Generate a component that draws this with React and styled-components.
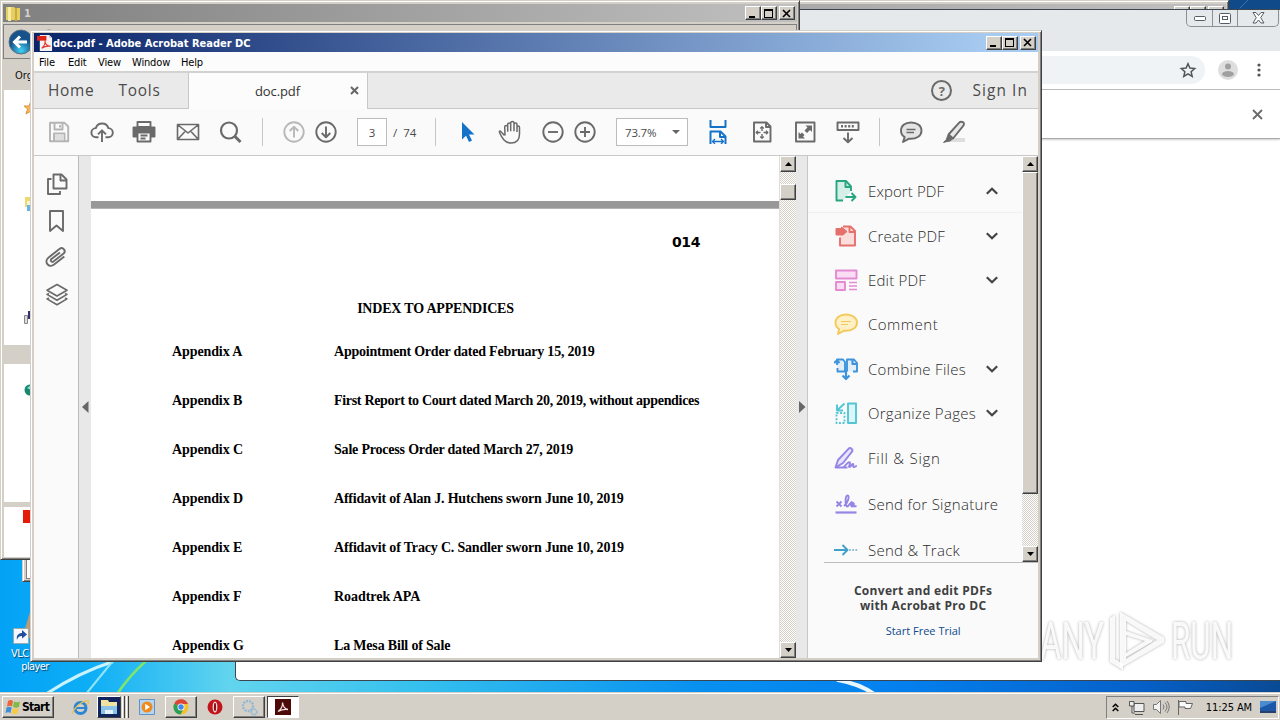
import React from "react";
import styled, { createGlobalStyle, css } from "styled-components";

const UI = `"DejaVu Sans Condensed", "DejaVu Sans", sans-serif`;
const CLEAN = `"Open Sans", "Noto Sans", sans-serif`;

const GlobalStyle = createGlobalStyle`
  * { box-sizing: border-box; }
  html, body { margin: 0; padding: 0; }
  body { width: 1280px; height: 720px; overflow: hidden; }
  svg { display: block; }
`;

const Desktop = styled.main`
  position: relative;
  width: 1280px;
  height: 720px;
  overflow: hidden;
  background: linear-gradient(
    90deg,
    #04a2f6 0,
    #0eaef6 90px,
    #62d4ee 230px,
    #35c0ee 420px,
    #0890f0 700px,
    #0480ee 900px,
    #0660c8 1140px,
    #0a4a94 1280px
  );
`;

const Streaks = styled.svg`
  position: absolute;
  left: 0;
  top: 0;
`;

const WindowFrame = styled.section`
  position: absolute;
  left: ${props => props.x}px;
  top: ${props => props.y}px;
  width: ${props => props.w}px;
  height: ${props => props.h}px;
  display: flex;
  flex-direction: column;
  overflow: hidden;
`;

const ClassicWindow = styled(WindowFrame)`
  padding: ${props => props.pad || "1px"};
  background: #d4d0c8;
  border: 1px solid;
  border-color: #d4d0c8 #404040 #404040 #d4d0c8;
  box-shadow: inset 1px 1px #fff, inset -1px -1px #808080;
`;

const TitleBar = styled.header`
  height: ${props => props.h || 18}px;
  flex: none;
  margin: ${props => props.inset || "1px"};
  display: flex;
  align-items: center;
  padding: 0 2px 0 3px;
  background: ${props =>
    props.active
      ? "linear-gradient(90deg, #0a246a, #a6caf0 95%)"
      : "linear-gradient(90deg, #808080, #c0c0c0)"};
`;

const TitleText = styled.span`
  flex: 1;
  padding: 1px 0 0 ${props => props.gap || 0}px;
  font: bold 11px ${UI};
  color: ${props => (props.active ? "#fff" : "#d4d0c8")};
  white-space: nowrap;
`;

const raised = css`
  background: #d4d0c8;
  border: 1px solid;
  border-color: #fff #404040 #404040 #fff;
  box-shadow: inset -1px -1px #808080;
`;

const CaptionButton = styled.button`
  ${raised}
  width: 16px;
  height: 14px;
  padding: 0;
  margin-left: ${props => (props.apart ? 2 : 0)}px;
  display: flex;
  align-items: center;
  justify-content: center;
`;

const Caption = ({ kind }) =>
  <CaptionButton apart={kind === "close" ? 1 : undefined}>
    <svg width="12" height="11" viewBox="0 0 12 11" fill="none" stroke="#000" shapeRendering="crispEdges">
      {kind === "min" && <path d="M2 8.5h6" strokeWidth="2" />}
      {kind === "max" && <path d="M1.5 2h8M1.5 1v8.5h8V1" strokeWidth="1.4" />}
      {kind === "close" && <path d="M2 2l7 7M9 2L2 9" strokeWidth="1.6" shapeRendering="auto" />}
    </svg>
  </CaptionButton>;

const Captions = () =>
  <React.Fragment>
    <Caption kind="min" />
    <Caption kind="max" />
    <Caption kind="close" />
  </React.Fragment>;

const BlankPane = styled.div`
  flex: 1;
  margin: 18px 2px 1px;
  background: #fff;
  border: 1px solid #808080;
`;

/* explorer window */

const NavStrip = styled.div`
  height: 35px;
  flex: none;
  margin: 2px 1px 0;
  padding: 4px 3px;
  border: 1px solid #808080;
`;

const CommandStrip = styled.div`
  height: 31px;
  flex: none;
  padding: 10px 0 0 13px;
  font: 11px ${UI};
  color: #111;
`;

const NavTree = styled.div`
  flex: 1;
  margin: 0 1px 1px 2px;
  background: #fff;
  display: flex;
  flex-direction: column;
`;

const TreeSlot = styled.div`
  height: ${props => props.h}px;
  flex: none;
  padding-left: ${props => props.indent || 0}px;
  background: ${props => props.fill || "transparent"};
`;

/* browser window */

const BrowserWindow = styled(WindowFrame)`
  background: #fff;
  border: 1px solid #3c4650;
  border-right: 0;
  border-radius: 0 0 0 5px;
`;

const BrowserTabs = styled.div`
  height: 41px;
  flex: none;
  background: #e6e9ec;
  display: flex;
  justify-content: flex-end;
  align-items: flex-start;
`;

const GlassButtons = styled.div`
  display: flex;
  height: 17px;
  margin-right: 1px;
  border: 1px solid #8b9096;
  border-top: 0;
  border-radius: 0 0 5px 5px;
`;

const GlassButton = styled.div`
  width: ${props => props.w}px;
  display: flex;
  align-items: center;
  justify-content: center;
  border-left: ${props => (props.first ? 0 : 1)}px solid #8b9096;
`;

const BrowserToolbar = styled.div`
  height: 39px;
  flex: none;
  display: flex;
  align-items: center;
  justify-content: flex-end;
  border-bottom: 1px solid #b8babd;
`;

const Omnibox = styled.div`
  flex: 1;
  height: 28px;
  border-radius: 14px;
  background: #eff3f6;
  display: flex;
  align-items: center;
  justify-content: flex-end;
  padding-right: 8px;
  margin-right: 13px;
`;

const MenuDots = styled.div`
  width: 42px;
  display: flex;
  justify-content: center;
`;

const InfoBar = styled.div`
  height: 49px;
  flex: none;
  display: flex;
  align-items: center;
  justify-content: flex-end;
  padding-right: 17px;
  border-bottom: 1px solid #a9a9a9;
  box-shadow: 0 1px 2px #ccc;
`;

/* reader window */

const MenuBar = styled.nav`
  height: 19px;
  flex: none;
  margin: 0 1px;
  display: flex;
  align-items: center;
  gap: 12px;
  padding: 1px 0 0 5px;
  background: #fcfcfc;
  font: 11px ${UI};
  color: #000;
`;

const MenuItem = styled.span`
  letter-spacing: -0.15px;
  width: ${props => props.w}px;
  white-space: nowrap;
`;

const TabStrip = styled.div`
  height: 38px;
  flex: none;
  margin: 0 1px;
  display: flex;
  background: #eaeaea;
  border-top: 2px solid #d2d2cf;
  font-family: ${CLEAN};
  color: #4b4b4b;
`;

const TabGroup = styled.div`
  display: flex;
  align-items: center;
  justify-content: ${props => (props.end ? "flex-end" : "flex-start")};
  flex: ${props => (props.end ? 1 : "none")};
  width: ${props => (props.end ? "auto" : "154px")};
  padding: 0 ${props => (props.end ? 10 : 0)}px 0 14px;
  gap: ${props => (props.end ? 20 : 24)}px;
  border-bottom: 1px solid #c8c8c8;
  font-size: 15.4px;
  letter-spacing: ${props => (props.end ? 1.1 : 0.75)}px;
`;

const DocTab = styled.div`
  width: 180px;
  display: flex;
  align-items: center;
  padding: 0 8px 1px 66px;
  justify-content: space-between;
  background: #fcfcfc;
  border: solid #c8c8c8;
  border-width: 0 1px;
  font-size: 13px;
  letter-spacing: -0.1px;
  color: #333;
`;

const Toolbar = styled.div`
  height: 47px;
  flex: none;
  margin: 0 1px;
  display: flex;
  align-items: center;
  background: #fafafa;
  border-bottom: 1px solid #c8c8c8;
  font: 11.5px ${CLEAN};
  color: #4b4b4b;
`;

const Tool = styled.span`
  width: 24px;
  flex: none;
  margin-left: ${props => props.ml}px;
`;

const Divider = styled.i`
  width: 1px;
  height: 28px;
  margin-left: ${props => props.ml}px;
  background: #c6c6c6;
`;

const Field = styled.div`
  width: ${props => props.w}px;
  height: 28px;
  margin-left: ${props => props.ml}px;
  display: flex;
  align-items: center;
  justify-content: ${props => (props.select ? "space-between" : "center")};
  padding: ${props => (props.select ? "0 7px 0 8px" : 0)};
  background: #fff;
  border: 1px solid #bcbcbc;
  letter-spacing: ${props => (props.select ? "-0.2px" : 0)};
`;

const PageTotal = styled.span`
  width: 28px;
  margin-left: 6px;
  white-space: pre;
`;

const Body = styled.div`
  flex: 1;
  min-height: 0;
  margin: 0 1px 1px;
  display: flex;
  background: #fafafa;
`;

const Rail = styled.aside`
  width: 45px;
  flex: none;
  border-right: 1px solid #b9b9b9;
  padding: 16px 0 0 11px;
  display: flex;
  flex-direction: column;
  gap: 13px;
`;

const Gutter = styled.div`
  width: ${props => props.w}px;
  flex: none;
  display: flex;
  align-items: center;
  justify-content: flex-end;
  background: #e8e8e8;
`;

const Pages = styled.div`
  width: 689px;
  flex: none;
  overflow: hidden;
  background: #fff;
  border-right: 1px solid #ddd;
`;

const PageBreak = styled.div`
  height: 8px;
  margin-top: 45px;
  background: #989898;
  border-bottom: 1px solid #b4b4b4;
`;

const PageNumber = styled.div`
  margin-top: 24px;
  padding-right: 79px;
  text-align: right;
  font: bold 14px/18px "DejaVu Sans", sans-serif;
  letter-spacing: -0.4px;
  color: #000;
`;

const PageTitle = styled.h1`
  margin: 48px 0 0 1px;
  text-align: center;
  font: bold 14px/20px "Liberation Serif", serif;
  letter-spacing: -0.2px;
  color: #000;
`;

const Entry = styled.div`
  display: grid;
  grid-template-columns: 162px 1fr;
  height: 49px;
  padding-left: 81px;
  font: bold 14px/20px "Liberation Serif", serif;
  color: #000;
  white-space: nowrap;
`;

const Entries = styled.div`
  margin-top: 23px;
`;

const EntryText = styled.span`
  letter-spacing: ${props => props.track}px;
`;

const ScrollTrack = styled.div`
  width: 16px;
  flex: none;
  display: flex;
  flex-direction: column;
  background: repeating-conic-gradient(#fff 0 25%, #d4d0c8 0 50%) 0 0 / 2px 2px;
`;

const ScrollButton = styled.div`
  ${raised}
  height: 16px;
  flex: none;
  display: flex;
  align-items: center;
  justify-content: center;
`;

const ScrollThumb = styled.div`
  ${raised}
  height: ${props => props.h}px;
  margin: ${props => props.offset || 0}px 0 auto;
`;

const Triangle = ({ down }) =>
  <svg width="7" height="4" viewBox="0 0 7 4">
    <path d={down ? "M0 0h7L3.5 4z" : "M0 4h7L3.5 0z"} />
  </svg>;

const Scrollbar = ({ thumb, offset }) =>
  <ScrollTrack>
    <ScrollButton><Triangle /></ScrollButton>
    <ScrollThumb h={thumb} offset={offset} />
    <ScrollButton><Triangle down /></ScrollButton>
  </ScrollTrack>;

const SidePanel = styled.aside`
  flex: 1;
  display: flex;
  flex-direction: column;
  border-left: 1px solid #c6c6c6;
  font-family: ${CLEAN};
`;

const PanelScroll = styled.div`
  height: 406px;
  flex: none;
  display: flex;
  overflow: hidden;
`;

const ToolList = styled.div`
  flex: 1;
  padding-top: 14px;
  overflow: hidden;
  height: 406px;
`;

const ToolRow = styled.div`
  height: ${props => props.h}px;
  display: flex;
  align-items: center;
  padding: 0 24px 0 26px;
  border-bottom: ${props => (props.open ? "1px solid #f0f0f0" : 0)};
`;

const ToolName = styled.span`
  flex: 1;
  padding-left: 10px;
  font-size: 15px;
  font-weight: 300;
  letter-spacing: ${props => props.track}px;
  color: #2a2a2a;
  white-space: nowrap;
`;

const Promo = styled.div`
  flex: 1;
  margin-left: 16px;
  border-top: 1px solid #bdbdbd;
  padding: 20px 16px 0 0;
  text-align: center;
`;

const PromoTitle = styled.div`
  font: bold 12px/15px ${CLEAN};
  letter-spacing: 0.3px;
  color: #404040;
  white-space: nowrap;
`;

const PromoLink = styled.div`
  margin-top: 10px;
  font-size: 11px;
  line-height: 15px;
  color: #0d4a8c;
`;

/* taskbar */

const TaskBar = styled.footer`
  position: absolute;
  left: 0;
  right: 0;
  bottom: 0;
  height: 28px;
  padding: 2px 1px 1px 2px;
  display: flex;
  align-items: center;
  background: #d4d0c8;
  border-top: 1px solid #d4d0c8;
  box-shadow: inset 0 1px #fff;
  font: 11px ${UI};
`;

const StartButton = styled.button`
  ${raised}
  width: 52px;
  height: 22px;
  padding: 0 0 0 2px;
  display: flex;
  align-items: center;
  gap: 1px;
  font: bold 12px ${UI};
  letter-spacing: -0.7px;
`;

const TaskButton = styled.div`
  width: ${props => props.w || 32}px;
  height: 22px;
  margin-left: ${props => props.ml || 0}px;
  flex: none;
  display: flex;
  align-items: center;
  justify-content: center;
  ${props => props.kind === "raised" && raised}
  ${props =>
    props.kind === "pressed" &&
    css`
      background: #fff;
      border: 1px solid;
      border-color: #404040 #fff #fff #404040;
    `}
`;

const StackEdge = styled.i`
  width: 3px;
  height: 22px;
  border-left: 1px solid #fff;
  border-right: 1px solid #404040;
  margin-left: 1px;
`;

const Tray = styled.div`
  margin-left: auto;
  width: 173px;
  height: 23px;
  display: flex;
  align-items: center;
  padding: 0 2px 0 5px;
  border: 1px solid;
  border-color: #808080 #fff #fff #808080;
`;

const Clock = styled.span`
  margin: 0 8px 0 auto;
  letter-spacing: -0.1px;
  white-space: nowrap;
`;

const TrayIcon = styled.span`
  margin-right: ${props => props.mr}px;
`;

const DesktopLabel = styled.div`
  position: absolute;
  left: 0;
  top: 647px;
  width: 70px;
  text-align: center;
  font: 11px/13px ${UI};
  letter-spacing: ${props => (props.tight ? -0.6 : 0)}px;
  color: #fff;
  text-shadow: 1px 1px 1px #04406a;
`;

const Shortcut = styled.svg`
  position: absolute;
  left: 13px;
  top: 612px;
`;

const Watermark = styled.svg`
  position: absolute;
  left: 1036px;
  top: 600px;
  filter: drop-shadow(0 0 1.5px rgba(0, 0, 0, 0.35));
`;

const G = "#6a6a6a";

const glyphs = {
  save: <g stroke="#b4b4b4"><path d="M3 2.8h14.5L21.2 6.500v14.700H3z" /><path d="M7.500 3v6.500h8V3M13 5v2.500M7 21v-7.500h10.500V21" /><path d="M8 14.500h8.500V20H8z" fill="#dedede" stroke="none" /></g>,
  cloud: <path d="M8.500 17.300H6.200a4.600 4.600 0 0 1-.4-9.200 6.600 6.600 0 0 1 12.600 0 4.600 4.600 0 0 1-.4 9.200h-2.500M12 22V10.500M8 14.300l4-4 4 4" />,
  print: <g><path d="M5.500 2h13v5h-13z" /><path d="M1.500 7.500h21v9h-4v-4h-13v4h-4z" fill={G} /><path d="M5.500 12.500h13v9h-13z" fill="#fafafa" /><path d="M8.500 15.500h7M8.500 18.500h5" /></g>,
  mail: <path d="M1.500 4.500h21v15h-21zM2 5l10 8L22 5M2 19l7.500-8M22 19l-7.500-8" strokeWidth="1.600" />,
  search: <g strokeWidth="2.200"><circle cx="10" cy="10.500" r="8" /><path d="M16 16.500L21.500 22" strokeWidth="3" /></g>,
  up: <g stroke="#b8b8b8"><circle cx="12" cy="12" r="9.700" /><path d="M12 17.500V7M7.700 11L12 6.800l4.300 4.200" /></g>,
  down: <g><circle cx="12" cy="12" r="9.700" /><path d="M12 6.500V17M7.700 13l4.300 4.200 4.300-4.200" /></g>,
  pointer: <path d="M6 2v17.500l4-3.800 3 6.300 3-1.500-3-6H18.500z" fill="#1473c8" stroke="none" />,
  hand: <path d="M6.500 15.500L3 11.800c-1-1.200-2-.8-1.400.9 1 2.300 2.400 5 4.400 7.300 1.700 2 3.500 3 7 3 5.500 0 8.500-3.500 8.500-9V7.500c0-1.900-2.500-1.900-2.500 0V12m0-4.500V4.300c0-1.900-3-1.900-3 0v7m0-7V3c0-2-3.300-2-3.300 0v8.300M12.700 4.300c0-1.900-3-1.900-3 0v7.500M9.700 7c0-1.900-3-1.900-3 0l.3 8.500" strokeWidth="1.500" />,
  minus: <g><circle cx="12" cy="12" r="9.700" /><path d="M7 12h10" /></g>,
  plus: <g><circle cx="12" cy="12" r="9.700" /><path d="M7 12h10M12 7v10" /></g>,
  fitWidth: <g stroke="#1473c8" strokeWidth="2"><path d="M4.500 0v7h15V0M4.500 24V11.500h10l5 5V24" /><path d="M14 12v5h5" /><path d="M6.500 21.500h11M9 19l-2.500 2.500L9 24M15 19l2.500 2.500L15 24" strokeWidth="1.300" /></g>,
  fitPage: <g><path d="M4 2.500h12.500l4 4v15H4zM16 3v4h4" /><path d="M12 7v11M6.500 12.500h11" strokeDasharray="4 3" strokeWidth="1.400" /><path d="M10.200 8.500L12 6.700l1.800 1.800M10.200 16.500l1.800 1.800 1.800-1.800M8 10.700l-1.800 1.800L8 14.300M16 10.700l1.800 1.800-1.800 1.800" strokeWidth="1.300" /></g>,
  full: <g><path d="M3 2.500h18.500v19H3z" /><path d="M12.500 5.500h6.500v6.500l-2-2-3 3-2.500-2.500 3-3zM12 18.500H5.500V12l2 2 1.500-1.500 2.500 2.500L10 16.500z" fill={G} stroke="none" /></g>,
  keys: <g><path d="M1.500 2.500h21v7.500h-21z" /><path d="M5 6.200h14" strokeDasharray="2 1.600" strokeWidth="2.400" /><path d="M12 12.500V22M7.500 18l4.500 4.300 4.500-4.300" /></g>,
  bubble: <g><path d="M12 2.500C5.800 2.500 2 6 2 10.700c0 3 1.400 5 3.700 6.400L4 22l6-3.300c8 .6 12.500-3.200 12.500-8 0-4.700-4-8.200-10.500-8.200z" fill="#e4e4e4" /><path d="M7.500 9.500h9M7.500 12.500h7.500" strokeWidth="1.400" /></g>,
  marker: <g><path d="M11 18h12v4H6z" fill="#ddd" stroke="none" /><path d="M6.500 14.500L17 2.800c1.500-1.600 5-1.300 5 1.200 0 1-.5 1.600-1 2.200L11 18.500z" fill="#e8e8e8" strokeWidth="1.900" /><path d="M6 15l4.500 4-2.500 2-3 .5-3.500 1 2.800-3z" fill={G} strokeWidth="1" /></g>,
  pages: <g><path d="M8.500 2.500h8l5 5v9h-13z" /><path d="M15.500 3v5.500H21M6.500 7H3v15h12v-3" /></g>,
  bookmark: <path d="M5 2h13v20l-6.500-5.500L5 22z" />,
  clip: <path d="M15 6.500l-7.500 7.700c-1.500 1.500.8 3.700 2.300 2.200l8.700-9c3-3.200-1.400-7.400-4.500-4.200l-9.500 9.800c-4.700 4.900 1.700 11.100 6.400 6.300l9-9.300" transform="translate(-.8 -.5) rotate(8 12 12)" />,
  layers: <g strokeWidth="1.600"><path d="M12 1.500l10 5.800-10 5.700L2 7.300z" /><path d="M4 10.400l-2 1 10 5.800 10-5.800-2-1M4 14.900l-2 1 10 5.800 10-5.800-2-1" /></g>,
  export: <g stroke="#27a680"><path d="M17 12V7.500L12 2H2.500v19.500H9" fill="#d5efe7" /><path d="M11.500 2v6H17M11.500 18h9M17.500 14l4 4-4 4" /></g>,
  create: <g stroke="#e5706b"><path d="M9 2.500h7.500L21 7v14.500H6v-8" fill="#fbdedb" /><path d="M15.500 3v5h5" /><path d="M2 4.500h5.500V3L13 7.500 9 11v0H2z" fill="#e5706b" stroke="#e5706b" strokeWidth="1" /></g>,
  edit: <g stroke="#e38bd2" fill="#fadcf5"><path d="M2 2.500h20.500v8H2zM2 14h9v8H2z" /><path d="M15 14.500h8M15 18h8M15 21.500h8" strokeWidth="1.400" /></g>,
  comment: <g stroke="#f3c95b"><path d="M12 2.500C5.800 2.500 1.500 6 1.500 10.700c0 3 1.400 5 3.700 6.400L4 22l6-3.300c8 .6 13-3.200 13-8 0-4.700-4.500-8.200-11-8.200z" fill="#fff1c5" /><path d="M7 9.500h10M7 12.500h7" strokeWidth="1.200" /></g>,
  combine: <g stroke="#3d94dc"><path d="M3 8V2.500h6L11 5v9.500H3.500V11M13 14.500v-12h7l3 3.500v8.500h-4" fill="#e2effa" /><path d="M0 6l3-2.500L5.500 6M18.500 3v4h4M12 13v9M8.500 18.500L12 22l3.500-3.500" strokeWidth="2.200" /></g>,
  organize: <g stroke="#51c6d4"><path d="M14 2.500h8V22h-8z" fill="#dcf5f7" /><path d="M2.500 12h8v10h-8z" strokeDasharray="2 1.600" /><path d="M10.500 2.500L4 8.500M3 3.500v6h6" /></g>,
  sign: <g stroke="#9485e6"><path d="M1.500 21.500L4 14 14.500 2.800c2-1.800 5 .6 3.500 2.900L9 17l-7.500 4.500h12" fill="#e9e5fb" /><path d="M9.500 21.500c3-4 6-6.500 6.500-4.500.3 1.500-2 4-.5 4s2-3 3.300-3-.5 3 1 3 1.700-1 3-1" /></g>,
  signature: <g stroke="#9485e6" strokeWidth="1.900"><path d="M1.500 20.500h21" strokeWidth="2.200" /><path d="M2.500 9.500l5 5M7.500 9.500l-5 5M10 14c4-3 6-10.500 3.500-10.500S11 14.500 13 14.500s3.500-4 4.500-4.500-1.500 4.500.5 4.500 2.500-3.500 1-3.500-1.500 4.500 3.500 3" /></g>,
  track: <g stroke="#3fa0cc"><path d="M0 12h13M8.500 7l5 5-5 5" /><path d="M15 12h9" strokeDasharray="1.800 1.400" stroke="#8fbfd6" /></g>
};

const Glyph = ({ name, size = 24 }) =>
  <svg width={size} height={size} viewBox="0 0 24 24" fill="none" stroke={G} strokeWidth="1.9" strokeLinejoin="round">
    {glyphs[name]}
  </svg>;

const Chevron = ({ up }) =>
  <svg width="12" height="8" viewBox="0 0 12 8" fill="none" stroke="#444" strokeWidth="2.200">
    <path d={up ? "M.8 6.800L6 1.700l5.200 5.100" : "M.8 1.200L6 6.300l5.200-5.100"} />
  </svg>;

const AcrobatLogo = () =>
  <svg width="16" height="16" viewBox="0 0 17 17">
    <path d="M3 0h10l3 3v14H3z" fill="#f5f1f0" />
    <path d="M0 1h10v5H0z" fill="#df2417" />
    <path d="M13 0v3h3z" fill="#b9b9c6" />
    <path d="M5 14c3-2 4-6 3.500-8 0 3 2 5.500 6 6-4-.5-6.500 0-9.500 2z" fill="none" stroke="#e2372c" strokeWidth="1.200" />
  </svg>;

const tools = [
  { icon: "export", name: "Export PDF", h: 43, arrow: "up", track: 0.1 },
  { icon: "create", name: "Create PDF", h: 45, arrow: "down", track: 0.15 },
  { icon: "edit", name: "Edit PDF", h: 43, arrow: "down", track: 0.2 },
  { icon: "comment", name: "Comment", h: 46, track: 0.5 },
  { icon: "combine", name: "Combine Files", h: 43, arrow: "down", track: 0.3 },
  { icon: "organize", name: "Organize Pages", h: 45, arrow: "down", track: 0.28 },
  { icon: "sign", name: "Fill & Sign", h: 45, track: 0.75 },
  { icon: "signature", name: "Send for Signature", h: 47, track: 0.28 },
  { icon: "track", name: "Send & Track", h: 45, track: 0.28 }
];

const entries = [
  { label: "Appendix A", text: "Appointment Order dated February 15, 2019", track: -0.22 },
  { label: "Appendix B", text: "First Report to Court dated March 20, 2019, without appendices", track: -0.31 },
  { label: "Appendix C", text: "Sale Process Order dated March 27, 2019", track: -0.2 },
  { label: "Appendix D", text: "Affidavit of Alan J. Hutchens sworn June 10, 2019", track: -0.2 },
  { label: "Appendix E", text: "Affidavit of Tracy C. Sandler sworn June 10, 2019", track: -0.18 },
  { label: "Appendix F", text: "Roadtrek APA", track: -0.05 },
  { label: "Appendix G", text: "La Mesa Bill of Sale", track: -0.18 }
];

const Explorer = () =>
  <ClassicWindow x={0} y={0} w={800} h={560}>
    <TitleBar inset="2px 1px 0">
      <svg width="14" height="15" viewBox="0 0 14 15">
        <path d="M0 1h8l1 1h5v12H0z" fill="#e6cf62" />
        <path d="M2 1h3v14H2z" fill="#f7eca6" />
        <path d="M9 2h2v13H9z" fill="#cba93c" />
      </svg>
      <TitleText gap={4}>1</TitleText>
      <Captions />
    </TitleBar>
    <NavStrip>
      <svg width="52" height="26" viewBox="0 0 52 26">
        <defs>
          <radialGradient id="nav" cy=".85">
            <stop offset="0" stopColor="#3fd2f2" />
            <stop offset="1" stopColor="#17528c" />
          </radialGradient>
        </defs>
        <circle cx="14" cy="13" r="12" fill="url(#nav)" stroke="#5d7180" />
        <path d="M20 13H8M13 7.500L7.500 13l5.500 5.500" fill="none" stroke="#fff" strokeWidth="3" />
        <circle cx="42" cy="13" r="12" fill="#b5b3ae" stroke="#777" />
      </svg>
    </NavStrip>
    <CommandStrip>Organize</CommandStrip>
    <NavTree>
      <TreeSlot h={107} indent={19}>
        <svg width="14" height="30" viewBox="0 0 14 30">
          <path d="M8 11l2 5 5 0-4 3 2 5-5-3-5 3 1.500-5L1 16h5z" fill="#f6b65c" stroke="#dc953c" />
        </svg>
      </TreeSlot>
      <TreeSlot h={113} indent={20}>
        <svg width="12" height="14" viewBox="0 0 12 14">
          <path d="M1 0h11v10H1z" fill="#eed96c" />
          <path d="M3 6h9v8H3z" fill="#69b4e0" />
          <path d="M3 4h8v4H3z" fill="#f2f5dc" />
        </svg>
      </TreeSlot>
      <TreeSlot h={35} indent={20}>
        <svg width="12" height="14" viewBox="0 0 12 14">
          <path d="M.5 5.500h3v8h-3z" fill="#ddd" stroke="#888" />
          <path d="M4 1h8v8H4z" fill="#33336d" />
          <path d="M6 3h4v3H6z" fill="#a2a8d8" />
        </svg>
      </TreeSlot>
      <TreeSlot h={19} fill="#d4d0c8" />
      <TreeSlot h={138} indent={20}>
        <svg width="14" height="32" viewBox="0 0 14 32">
          <circle cx="6" cy="26" r="5.500" fill="#18886f" />
          <path d="M3 24l4-3v5z" fill="#8ae2db" />
        </svg>
      </TreeSlot>
      <TreeSlot h={5} fill="#d4d0c8" />
      <TreeSlot h={20} indent={19}>
        <svg width="12" height="16" viewBox="0 0 12 16"><path d="M0 3h12v13H0z" fill="#e31b08" /></svg>
      </TreeSlot>
    </NavTree>
  </ClassicWindow>;

const Browser = () =>
  <BrowserWindow x={235} y={9} w={1045} h={672}>
    <BrowserTabs>
      <GlassButtons>
        <GlassButton w={25} first={1}>
          <svg width="12" height="5"><rect x=".5" y=".5" width="11" height="4" rx="1" fill="#fff" stroke="#555d66" /></svg>
        </GlassButton>
        <GlassButton w={25}>
          <svg width="12" height="11" fill="#fff" stroke="#555d66"><rect x=".5" y=".5" width="11" height="10" rx="1" /><rect x="3.500" y="3.500" width="5" height="3" /></svg>
        </GlassButton>
        <GlassButton w={41}>
          <svg width="13" height="12" viewBox="0 0 13 12"><path d="M1 .5h3l2.500 3L9 .5h3L8.700 5.700 12 11H9L6.500 8 4 11H1l3.300-5.300z" fill="#fff" stroke="#555d66" /></svg>
        </GlassButton>
      </GlassButtons>
    </BrowserTabs>
    <BrowserToolbar>
      <Omnibox>
        <svg width="18" height="18" viewBox="0 0 18 18" fill="none" stroke="#51565c" strokeWidth="1.500">
          <path d="M9 2.700l1.900 4.400 4.800.4-3.600 3.200 1.100 4.700L9 12.900l-4.200 2.500 1.100-4.700-3.600-3.200 4.800-.4z" />
        </svg>
      </Omnibox>
      <svg width="20" height="20" viewBox="0 0 20 20">
        <circle cx="10" cy="10" r="10" fill="#dedede" />
        <circle cx="10" cy="6.500" r="3" fill="#a0a0a0" />
        <ellipse cx="10" cy="14" rx="6" ry="3" fill="#a0a0a0" />
      </svg>
      <MenuDots>
        <svg width="4" height="14" viewBox="0 0 4 14" fill="#505458"><circle cx="2" cy="2" r="1.600" /><circle cx="2" cy="7" r="1.600" /><circle cx="2" cy="12" r="1.600" /></svg>
      </MenuDots>
    </BrowserToolbar>
    <InfoBar>
      <svg width="11" height="11" viewBox="0 0 11 11" stroke="#6b6b6b" strokeWidth="1.800"><path d="M1 1l9 9M10 1l-9 9" /></svg>
    </InfoBar>
  </BrowserWindow>;

const HelpBadge = styled.span`
  width: 21px;
  height: 21px;
  border: 2px solid #6a6a6a;
  border-radius: 50%;
  display: flex;
  align-items: center;
  justify-content: center;
  font: bold 13px ${CLEAN};
  letter-spacing: 0;
  color: #6a6a6a;
`;

const Reader = () =>
  <ClassicWindow x={30} y={30} w={1012} h={632} pad="1px 2px 2px 2px">
    <TitleBar active={1} h={19} inset="1px 1px 0">
      <AcrobatLogo />
      <TitleText active={1}>doc.pdf - Adobe Acrobat Reader DC</TitleText>
      <Captions />
    </TitleBar>
    <MenuBar>
      <MenuItem w={17}>File</MenuItem>
      <MenuItem w={18}>Edit</MenuItem>
      <MenuItem w={22}>View</MenuItem>
      <MenuItem w={37}>Window</MenuItem>
      <MenuItem w={24}>Help</MenuItem>
    </MenuBar>
    <TabStrip>
      <TabGroup>
        <span>Home</span>
        <span>Tools</span>
      </TabGroup>
      <DocTab>
        <span>doc.pdf</span>
        <svg width="9" height="9" viewBox="0 0 9 9" stroke="#666" strokeWidth="2"><path d="M1 1l7 7M8 1L1 8" /></svg>
      </DocTab>
      <TabGroup end={1}>
        <HelpBadge>?</HelpBadge>
        <span>Sign In</span>
      </TabGroup>
    </TabStrip>
    <Toolbar>
      <Tool ml={13}><Glyph name="save" /></Tool>
      <Tool ml={19}><Glyph name="cloud" /></Tool>
      <Tool ml={18}><Glyph name="print" /></Tool>
      <Tool ml={20}><Glyph name="mail" /></Tool>
      <Tool ml={19}><Glyph name="search" /></Tool>
      <Divider ml={19} />
      <Tool ml={19}><Glyph name="up" /></Tool>
      <Tool ml={8}><Glyph name="down" /></Tool>
      <Field ml={19} w={30}>3</Field>
      <PageTotal>/  74</PageTotal>
      <Divider ml={14} />
      <Tool ml={20}><Glyph name="pointer" /></Tool>
      <Tool ml={18}><Glyph name="hand" /></Tool>
      <Tool ml={19}><Glyph name="minus" /></Tool>
      <Tool ml={8}><Glyph name="plus" /></Tool>
      <Field ml={19} w={72} select={1}>
        73.7%
        <svg width="8" height="4"><path d="M0 0h8L4 4z" fill="#666" /></svg>
      </Field>
      <Tool ml={18}><Glyph name="fitWidth" /></Tool>
      <Tool ml={20}><Glyph name="fitPage" /></Tool>
      <Tool ml={19}><Glyph name="full" /></Tool>
      <Tool ml={19}><Glyph name="keys" /></Tool>
      <Divider ml={19} />
      <Tool ml={19}><Glyph name="bubble" /></Tool>
      <Tool ml={19}><Glyph name="marker" /></Tool>
    </Toolbar>
    <Body>
      <Rail>
        <Glyph name="pages" />
        <Glyph name="bookmark" />
        <Glyph name="clip" />
        <Glyph name="layers" />
      </Rail>
      <Gutter w={12}>
        <svg width="9" height="12"><path d="M6.500 0v12L0 6z" fill="#666" /></svg>
      </Gutter>
      <Pages>
        <PageBreak />
        <PageNumber>014</PageNumber>
        <PageTitle>INDEX TO APPENDICES</PageTitle>
        <Entries>
          {entries.map(entry =>
            <Entry key={entry.label}>
              <EntryText track={-0.1}>{entry.label}</EntryText>
              <EntryText track={entry.track}>{entry.text}</EntryText>
            </Entry>
          )}
        </Entries>
      </Pages>
      <Scrollbar thumb={16} offset={12} />
      <Gutter w={11}>
        <svg width="10" height="12"><path d="M2 0v12l6.500-6z" fill="#666" /></svg>
      </Gutter>
      <SidePanel>
        <PanelScroll>
          <ToolList>
            {tools.map(tool =>
              <ToolRow key={tool.name} h={tool.h} open={tool.arrow === "up" ? 1 : undefined}>
                <Glyph name={tool.icon} />
                <ToolName track={tool.track}>{tool.name}</ToolName>
                {tool.arrow && <Chevron up={tool.arrow === "up"} />}
              </ToolRow>
            )}
          </ToolList>
          <Scrollbar thumb={322} />
        </PanelScroll>
        <Promo>
          <PromoTitle>Convert and edit PDFs<br />with Acrobat Pro DC</PromoTitle>
          <PromoLink>Start Free Trial</PromoLink>
        </Promo>
      </SidePanel>
    </Body>
  </ClassicWindow>;

const Tasks = () =>
  <TaskBar>
    <StartButton>
      <svg width="16" height="16" viewBox="0 0 16 16">
        <path d="M3 2c2-1.500 3.500-1.200 5 0L7 7.500C5.500 6.500 4 6.500 2 7.500z" fill="#e8663a" />
        <path d="M9 2.500c2 1 4 1 6 0L14 8c-2 1-4 .8-6 0z" fill="#82ba46" />
        <path d="M1.500 8.500c2-1 3.500-1 5.200 0L5.500 14c-1.500-1-3-1-5 0z" fill="#3f90d6" />
        <path d="M7.700 9c2 1 4 1 6 0l-1.200 5.500c-2 1-4 .8-6 0z" fill="#f7c94a" />
      </svg>
      Start
    </StartButton>
    <TaskButton ml={10}>
      <svg width="17" height="17" viewBox="0 0 17 17" fill="none">
        <circle cx="8.500" cy="9" r="5.500" stroke="#2d86d3" strokeWidth="3" />
        <path d="M4 9h10" stroke="#2d86d3" strokeWidth="2" />
        <path d="M1 15C0 11 10 1 16 2c1 1 0 3-1 4" stroke="#e9c24c" strokeWidth="1.300" />
      </svg>
    </TaskButton>
    <TaskButton ml={1} w={24} kind="raised">
      <svg width="22" height="20" viewBox="0 0 22 20">
        <path d="M0 0h22v20H0z" fill="#12245e" />
        <path d="M3 3h7l1 2h8v12H3z" fill="#f0e3a0" />
        <path d="M3 9h16v8H3z" fill="#8cc4e8" />
        <path d="M7 13h8v4H7z" fill="#e6f2fb" />
      </svg>
    </TaskButton>
    <StackEdge />
    <StackEdge />
    <TaskButton ml={2}>
      <svg width="16" height="16" viewBox="0 0 16 16">
        <path d="M.5.500h15v15H.5z" fill="#b5d5f0" stroke="#5c93c8" />
        <circle cx="8" cy="8" r="5.500" fill="#f08a1d" />
        <path d="M6.200 4.800v6.400L11 8z" fill="#fff" />
      </svg>
    </TaskButton>
    <TaskButton ml={2} kind="raised">
      <svg width="16" height="16" viewBox="0 0 16 16">
        <circle cx="8" cy="8" r="7.500" fill="#f2c32e" />
        <path d="M8 8L1.300 4.500A7.500 7.500 0 0 1 15 5H8z" fill="#dc4437" />
        <path d="M8 8L1.300 4.500A7.500 7.500 0 0 0 7.500 15.500L10.500 10z" fill="#2c9f57" />
        <circle cx="8" cy="8" r="3.500" fill="#fff" />
        <circle cx="8" cy="8" r="2.700" fill="#4486f0" />
      </svg>
    </TaskButton>
    <TaskButton ml={2}>
      <svg width="16" height="16" viewBox="0 0 16 16">
        <circle cx="8" cy="8" r="7.500" fill="#c4141b" />
        <ellipse cx="8" cy="8" rx="2.400" ry="5.500" fill="#f6e3e3" />
        <ellipse cx="8" cy="8" rx="1.100" ry="4.300" fill="#8d0f14" />
      </svg>
    </TaskButton>
    <TaskButton ml={2} kind="raised">
      <svg width="17" height="17" viewBox="0 0 17 17" fill="none" stroke="#93b8d4">
        <circle cx="7" cy="7" r="5" strokeWidth="2.400" strokeDasharray="2 1" />
        <circle cx="13" cy="13" r="2.800" strokeWidth="1.800" strokeDasharray="1.500 .7" />
      </svg>
    </TaskButton>
    <TaskButton ml={2} kind="pressed">
      <svg width="16" height="16" viewBox="0 0 16 16">
        <path d="M0 0h16v16H0z" fill="#4b0a08" />
        <path d="M3 12.500c3-1.500 5-6 4.500-9 .5 4 2.500 6.500 5.500 7-4-.5-7 .3-10 2z" fill="none" stroke="#f0dede" strokeWidth="1.300" />
      </svg>
    </TaskButton>
    <Tray>
      <TrayIcon mr={10}>
        <svg width="7" height="9" viewBox="0 0 7 9" fill="none" stroke="#000" strokeWidth="1.500"><path d="M.7 4l2.800-2.800L6.300 4M.7 8l2.800-2.800L6.300 8" /></svg>
      </TrayIcon>
      <TrayIcon mr={8}>
        <svg width="16" height="15" viewBox="0 0 16 15" fill="#eee" stroke="#555"><path d="M5 3.500h10v8H5zM6 14.500h8M3 6v7h3" /><path d="M.5 1.500h4.500V6H.5z" /></svg>
      </TrayIcon>
      <TrayIcon mr={7}>
        <svg width="17" height="14" viewBox="0 0 17 14" fill="#f3f3f3" stroke="#777"><path d="M.5 4.500h3l4-4v13l-4-4h-3z" /><path d="M10 4.500q2 2.500 0 5M12 2.500q4 4.500 0 9M14 1q4.500 6 0 12" fill="none" /></svg>
      </TrayIcon>
      <TrayIcon mr={0}>
        <svg width="17" height="15" viewBox="0 0 17 15" fill="#fafafa" stroke="#666"><path d="M1.500 0v15M2 1.500h7v2h6.500l-2 5H8v-1.500H2z" /></svg>
      </TrayIcon>
      <Clock>11:25 AM</Clock>
      <svg width="16" height="12" viewBox="0 0 16 12"><path d="M0 0h16v10H0z" fill="#1d58a8" /><path d="M0 0h16L0 7z" fill="#4a8bd2" /><path d="M0 10h16v2H0z" fill="#27406a" /></svg>
    </Tray>
  </TaskBar>;

const App = () =>
  <React.Fragment>
    <GlobalStyle />
    <Desktop>
      <Streaks width="1280" height="720" viewBox="0 0 1280 720" fill="none" strokeLinecap="round">
        <path d="M46 694Q80 672 112 662" stroke="#c9f3ff" strokeWidth="3" />
        <path d="M86 694l26-32" stroke="#8fe4fb" strokeWidth="2" />
        <path d="M117 694q14-20 28-32" stroke="#7fe667" strokeWidth="2.500" />
        <path d="M838 680q22 4 36 14" stroke="#e9f6ff" strokeWidth="4" />
        <path d="M1229 0h51v9h-51z" fill="#104a88" />
        <path d="M1240 8l8-8" stroke="#3c74ac" />
      </Streaks>
      <ClassicWindow x={22} y={0} w={1207} h={582}>
        <TitleBar inset="2px 1px 0"><TitleText /><Captions /></TitleBar>
        <BlankPane />
      </ClassicWindow>
      <Shortcut width="24" height="32" viewBox="0 0 24 32">
        <path d="M17 0l7-2v28H9z" fill="#b59a7c" />
        <path d="M.5 16.500h15v15H.5z" fill="#f4f7fb" stroke="#9aa" />
        <path d="M4 28c-1-5 2-7 5-7v-3l5 4.500-5 4v-2.500c-2 0-4 .5-5 4z" fill="#1f4f9c" />
      </Shortcut>
      <DesktopLabel tight={1}>VLC media<br />player</DesktopLabel>
      <Browser />
      <Explorer />
      <Watermark width="240" height="90" viewBox="0 0 240 90" fill="#fff" fillOpacity=".9">
        <text x="4" y="59" fontFamily="Roboto, sans-serif" fontSize="52" textLength="64" lengthAdjust="spacingAndGlyphs">ANY</text>
        <text x="135" y="59" fontFamily="Roboto, sans-serif" fontSize="52" textLength="62" lengthAdjust="spacingAndGlyphs">RUN</text>
        <path d="M84 12l44 25.500v5L84 68zM90 21v38l31-19z" fillRule="evenodd" />
        <path d="M74 18l5-3v44l8 5v6l-13-8z" />
        <path d="M90 31l26 9v2L90 57v-4l19-12-19-6z" />
      </Watermark>
      <Reader />
      <Tasks />
    </Desktop>
  </React.Fragment>;

export default App;
